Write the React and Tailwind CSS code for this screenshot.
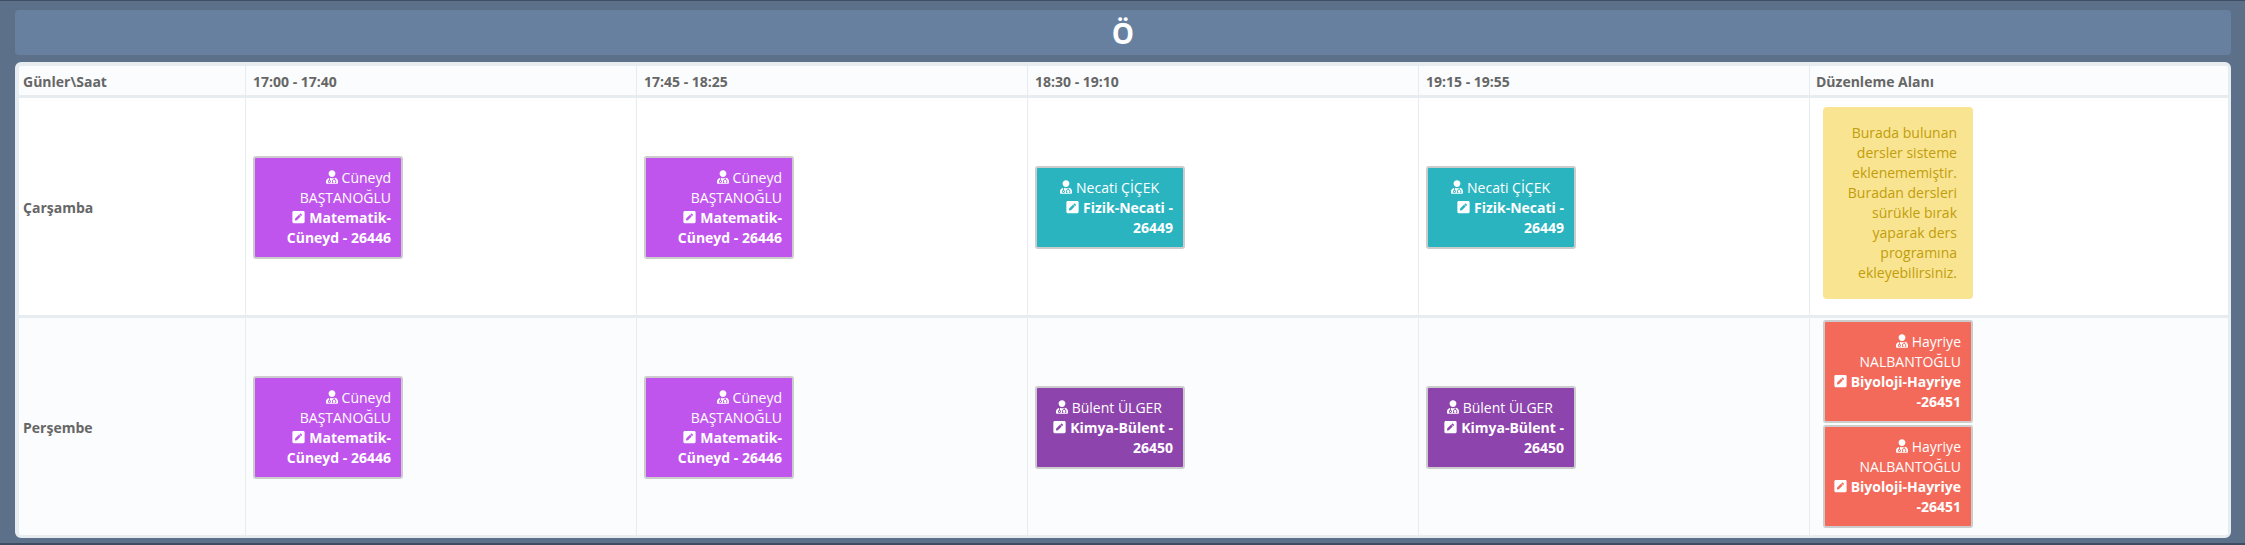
import React from 'react';
import { FaUserMd, FaPenSquare } from 'react-icons/fa';

const cuneyd = { teacher: 'Cüneyd BAŞTANOĞLU', lesson: 'Matematik-Cüneyd - 26446', color: 'bg-[#bf55ec]' };
const necati = { teacher: 'Necati ÇİÇEK', lesson: 'Fizik-Necati - 26449', color: 'bg-[#2ab4c0]', shift: 'pr-[14px]' };
const bulent = { teacher: 'Bülent ÜLGER', lesson: 'Kimya-Bülent - 26450', color: 'bg-[#8e44ad]', shift: 'pr-[11px]' };
const hayriye = { teacher: 'Hayriye NALBANTOĞLU', lesson: 'Biyoloji-Hayriye -26451', color: 'bg-[#f36a5a]' };

const hours = ['17:00 - 17:40', '17:45 - 18:25', '18:30 - 19:10', '19:15 - 19:55'];

const rows = [
    { day: 'Çarşamba', lessons: [cuneyd, cuneyd, necati, necati] },
    { day: 'Perşembe', lessons: [cuneyd, cuneyd, bulent, bulent] },
];

const LessonCard = ({ lesson }) => (
    <div className={`${lesson.color} w-[150px] rounded-[3px] border-2 border-[#cccccc] pb-[9px] pl-[8px] pr-[10px] pt-[10px] text-right text-[14px] leading-[20px] text-white`}>
        <div className={lesson.shift}>
            <FaUserMd className="mr-[4px] inline-block h-[14px] w-[12px] align-[-1px]" />
            {lesson.teacher}
        </div>
        <div className="font-bold">
            <FaPenSquare className="mr-[4px] inline-block h-[14px] w-[13px] align-[-1px]" />
            {lesson.lesson}
        </div>
    </div>
);

export default function App() {
    return (
        <div className="h-[545px] w-[2245px] overflow-hidden border-t border-b-2 border-t-[#3d4c60] border-b-[#3d4c60] bg-[#5c7089] pl-[15px] pr-[14px] pt-[9px] font-['Open_Sans',sans-serif]">
            <div className="flex h-[45px] items-center justify-center rounded-[4px] bg-[#67809f] text-[28px] font-bold text-white">
                Ö
            </div>
            <div className="mt-[7px] overflow-hidden rounded-[6px] border-[3px] border-l-4 border-t-4 border-[#e7ecf1] bg-white">
                <table className="w-[2209px] table-fixed border-separate border-spacing-0 text-left text-[14px] text-[#666666]">
                    <thead>
                        <tr className="h-[32px] bg-[#fbfcfd]">
                            <th className="w-[226px] border-b-[3px] border-[#e7ecf1] pl-[4px] pt-[2px] font-bold">Günler\Saat</th>
                            {hours.map((hour) => (
                                <th key={hour} className="w-[391px] border-b-[3px] border-l border-[#e7ecf1] pl-[7px] pt-[2px] font-bold">{hour}</th>
                            ))}
                            <th className="border-b-[3px] border-l border-[#e7ecf1] pl-[6px] pt-[2px] font-bold">Düzenleme Alanı</th>
                        </tr>
                    </thead>
                    <tbody>
                        {rows.map((row, index) => (
                            <tr key={row.day} className={index === 0 ? 'h-[220px] bg-white' : 'h-[217px] bg-[#fbfcfd]'}>
                                <td className={`${index === 0 ? 'border-b-[3px]' : ''} border-[#e7ecf1] pl-[4px] pt-[2px] font-bold`}>{row.day}</td>
                                {row.lessons.map((lesson, i) => (
                                    <td key={i} className={`${index === 0 ? 'border-b-[3px]' : ''} border-l border-[#e7ecf1] pl-[7px] pt-[2px]`}>
                                        <LessonCard lesson={lesson} />
                                    </td>
                                ))}
                                {index === 0 ? (
                                    <td className="border-b-[3px] border-l border-[#e7ecf1] pl-[13px] pt-[9px] align-top">
                                        <div className="w-[150px] rounded-[4px] bg-[#f9e491] p-[16px] text-right leading-[20px] text-[#c29d0b]">
                                            Burada bulunan dersler sisteme eklenememiştir. Buradan dersleri sürükle bırak yaparak ders programına ekleyebilirsiniz.
                                        </div>
                                    </td>
                                ) : (
                                    <td className="border-l border-[#e7ecf1] pl-[13px] pt-[2px] align-top">
                                        <div className="flex flex-col gap-[2px]">
                                            <LessonCard lesson={hayriye} />
                                            <LessonCard lesson={hayriye} />
                                        </div>
                                    </td>
                                )}
                            </tr>
                        ))}
                    </tbody>
                </table>
            </div>
        </div>
    );
}
